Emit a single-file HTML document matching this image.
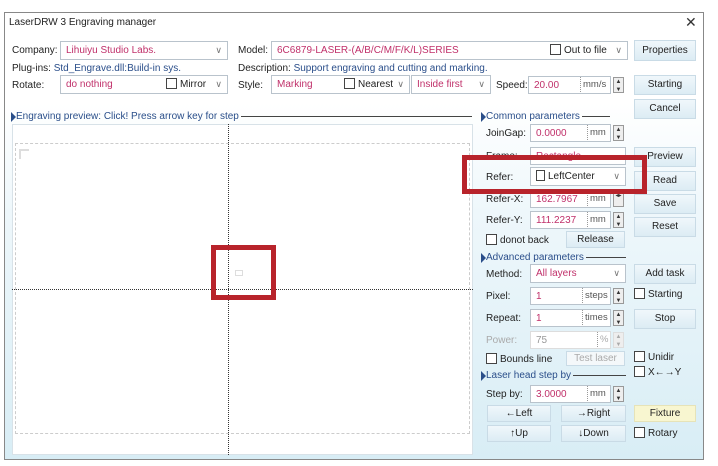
<!DOCTYPE html><html><head><style>
*{box-sizing:border-box;margin:0;padding:0}
body{width:718px;height:466px;position:relative;overflow:hidden;background:#fff;font-family:"Liberation Sans",sans-serif;font-size:10px;color:#222}
#win{position:absolute;left:4px;top:12px;width:700px;height:448px;border:1px solid #888;background:linear-gradient(#fff 0,#fff 90px,#eef7fb 200px,#d8edf5 448px)}
.a{position:absolute;white-space:nowrap}
.box{position:absolute;border:1px solid #b9c3cc;background:#fff;color:#c0306a;padding-left:5px;line-height:17px;white-space:nowrap;overflow:hidden}
.dd::after{content:"\2228";position:absolute;right:5px;top:0;color:#777;font-size:9px}
.btn{position:absolute;border:1px solid #c9dbe6;background:linear-gradient(#f0f7fb,#dcecf4);text-align:center;line-height:18px;color:#222}
.cb{display:inline-block;width:11px;height:11px;border:1px solid #444;background:#fff;vertical-align:-2px;margin-right:3px}
.sp{position:absolute;width:11px;border:1px solid #999;background:#eee;font-size:6px;line-height:8px;text-align:center;color:#333}
.u{position:absolute;color:#555;border-left:1px dotted #999;padding-left:2px;line-height:15px;font-size:9.5px}
.blue{color:#2a4e8a}
.tri{display:inline-block;width:0;height:0;border-left:5px solid #2a4e8a;border-top:5px solid transparent;border-bottom:5px solid transparent;vertical-align:-1px;flex:none}
.hd{position:absolute;display:flex;align-items:center;white-space:nowrap}
.hd i{flex:1;height:1px;background:#444;margin-left:2px}
.red{position:absolute;border:5px solid #b8232b}
</style></head><body>
<div id="win"></div>
<div class="a" style="left:9px;top:17px;font-size:10px">LaserDRW 3 Engraving manager</div>
<div class="a" style="left:685px;top:14px;font-size:14px;color:#333">✕</div>

<div class="a" style="left:12px;top:45px">Company:</div>
<div class="box dd" style="left:60px;top:41px;width:168px;height:19px">Lihuiyu Studio Labs.</div>
<div class="a" style="left:238px;top:45px">Model:</div>
<div class="box dd" style="left:271px;top:41px;width:357px;height:19px">6C6879-LASER-(A/B/C/M/F/K/L)SERIES<span style="position:absolute;left:278px;color:#222"><span class="cb"></span>Out to file</span></div>
<div class="btn" style="left:634px;top:40px;width:62px;height:21px;line-height:19px">Properties</div>

<div class="a" style="left:12px;top:63px">Plug-ins: <span class="blue">Std_Engrave.dll:Build-in sys.</span></div>
<div class="a" style="left:238px;top:63px">Description: <span class="blue">Support engraving and cutting and marking.</span></div>

<div class="a" style="left:12px;top:80px">Rotate:</div>
<div class="box dd" style="left:60px;top:75px;width:168px;height:19px">do nothing<span style="position:absolute;left:105px;color:#222"><span class="cb"></span>Mirror</span></div>
<div class="a" style="left:238px;top:80px">Style:</div>
<div class="box dd" style="left:271px;top:75px;width:139px;height:19px">Marking<span style="position:absolute;left:72px;color:#222"><span class="cb"></span>Nearest</span></div>
<div class="box dd" style="left:411px;top:75px;width:80px;height:19px">Inside first</div>
<div class="a" style="left:496px;top:80px">Speed:</div>
<div class="box" style="left:528px;top:76px;width:83px;height:18px">20.00</div>
<div class="u" style="left:580px;top:77px">mm/s</div>
<div class="sp" style="left:613px;top:77px;height:16px">▲<br>▼</div>
<div class="btn" style="left:634px;top:75px;width:62px;height:20px">Starting</div>
<div class="btn" style="left:634px;top:99px;width:62px;height:20px">Cancel</div>

<div class="hd" style="left:11px;top:111px;width:461px"><span class="tri"></span><span class="blue">Engraving preview: Click! Press arrow key for step</span><i></i></div>
<div class="hd" style="left:481px;top:111px;width:129px"><span class="tri"></span><span class="blue">Common parameters</span><i></i></div>

<div style="position:absolute;left:12px;top:124px;width:461px;height:331px;background:#fff;border:1px solid #d8e2e8"></div>
<div style="position:absolute;left:15px;top:143px;width:455px;height:291px;border:1px dashed #ccc"></div>
<div style="position:absolute;left:228px;top:124px;height:331px;border-left:1px dotted #333"></div>
<div style="position:absolute;left:12px;top:289px;width:461px;border-top:1px dotted #333"></div>
<div style="position:absolute;left:19px;top:149px;width:10px;height:10px;border-left:2px solid #ddd;border-top:2px solid #ddd"></div>
<div style="position:absolute;left:235px;top:270px;width:8px;height:6px;border:1px solid #ddd"></div>

<div class="a" style="left:486px;top:128px">JoinGap:</div>
<div class="box" style="left:530px;top:124px;width:81px;height:18px">0.0000</div><div class="u" style="left:587px;top:125px">mm</div><div class="sp" style="left:613px;top:125px;height:16px">▲<br>▼</div>
<div class="a" style="left:486px;top:151px">Frame:</div>
<div class="box" style="left:530px;top:147px;width:96px;height:18px">Rectangle</div>
<div class="a" style="left:486px;top:172px">Refer:</div>
<div class="box dd" style="left:530px;top:167px;width:96px;height:19px;color:#222"><span class="cb" style="width:9px"></span>LeftCenter</div>
<div class="a" style="left:486px;top:194px">Refer-X:</div>
<div class="box" style="left:530px;top:190px;width:81px;height:18px">162.7967</div><div class="u" style="left:587px;top:191px">mm</div><div class="sp" style="left:613px;top:191px;height:16px">◂▸</div>
<div class="a" style="left:486px;top:215px">Refer-Y:</div>
<div class="box" style="left:530px;top:211px;width:81px;height:18px">111.2237</div><div class="u" style="left:587px;top:212px">mm</div><div class="sp" style="left:613px;top:212px;height:16px">▲<br>▼</div>
<div class="a" style="left:486px;top:234px"><span class="cb"></span>donot back</div>
<div class="btn" style="left:566px;top:231px;width:59px;height:17px;line-height:15px">Release</div>
<div class="hd" style="left:481px;top:252px;width:145px"><span class="tri"></span><span class="blue">Advanced parameters</span><i></i></div>
<div class="a" style="left:486px;top:269px">Method:</div>
<div class="box dd" style="left:530px;top:264px;width:96px;height:19px">All layers</div>
<div class="a" style="left:486px;top:291px">Pixel:</div>
<div class="box" style="left:530px;top:287px;width:81px;height:18px">1</div><div class="u" style="left:582px;top:288px">steps</div><div class="sp" style="left:613px;top:288px;height:16px">▲<br>▼</div>
<div class="a" style="left:486px;top:313px">Repeat:</div>
<div class="box" style="left:530px;top:309px;width:81px;height:18px">1</div><div class="u" style="left:582px;top:310px">times</div><div class="sp" style="left:613px;top:310px;height:16px">▲<br>▼</div>
<div class="a" style="left:486px;top:335px;color:#aaa">Power:</div>
<div class="box" style="left:530px;top:331px;width:81px;height:18px;color:#999;border-color:#ddd">75</div><div class="u" style="left:597px;top:332px;color:#aaa">%</div><div class="sp" style="left:613px;top:332px;height:16px;color:#aaa;border-color:#ddd">▲<br>▼</div>
<div class="a" style="left:486px;top:353px"><span class="cb"></span>Bounds line</div>
<div class="btn" style="left:566px;top:351px;width:59px;height:15px;line-height:13px;color:#aaa;background:#f4f8fa">Test laser</div>
<div class="hd" style="left:481px;top:370px;width:145px"><span class="tri"></span><span class="blue">Laser head step by</span><i></i></div>
<div class="a" style="left:486px;top:389px">Step by:</div>
<div class="box" style="left:530px;top:385px;width:81px;height:18px">3.0000</div><div class="u" style="left:587px;top:386px">mm</div><div class="sp" style="left:613px;top:386px;height:16px">▲<br>▼</div>
<div class="btn" style="left:487px;top:405px;width:64px;height:17px;line-height:15px">←Left</div>
<div class="btn" style="left:561px;top:405px;width:65px;height:17px;line-height:15px">→Right</div>
<div class="btn" style="left:487px;top:425px;width:64px;height:17px;line-height:15px">↑Up</div>
<div class="btn" style="left:561px;top:425px;width:65px;height:17px;line-height:15px">↓Down</div>

<div class="btn" style="left:634px;top:147px;width:62px;height:20px">Preview</div>
<div class="btn" style="left:634px;top:171px;width:62px;height:20px">Read</div>
<div class="btn" style="left:634px;top:194px;width:62px;height:20px">Save</div>
<div class="btn" style="left:634px;top:217px;width:62px;height:20px">Reset</div>
<div class="btn" style="left:634px;top:264px;width:62px;height:20px">Add task</div>
<div class="a" style="left:634px;top:288px"><span class="cb"></span>Starting</div>
<div class="btn" style="left:634px;top:309px;width:62px;height:20px">Stop</div>
<div class="a" style="left:634px;top:351px"><span class="cb"></span>Unidir</div>
<div class="a" style="left:634px;top:366px"><span class="cb"></span>X←→Y</div>
<div class="btn" style="left:634px;top:405px;width:62px;height:17px;line-height:15px;background:#f8f6d0;border-color:#e6e3b8">Fixture</div>
<div class="a" style="left:634px;top:427px"><span class="cb"></span>Rotary</div>

<div class="red" style="left:462px;top:155px;width:185px;height:39px"></div>
<div class="red" style="left:211px;top:245px;width:65px;height:55px"></div>
</body></html>
